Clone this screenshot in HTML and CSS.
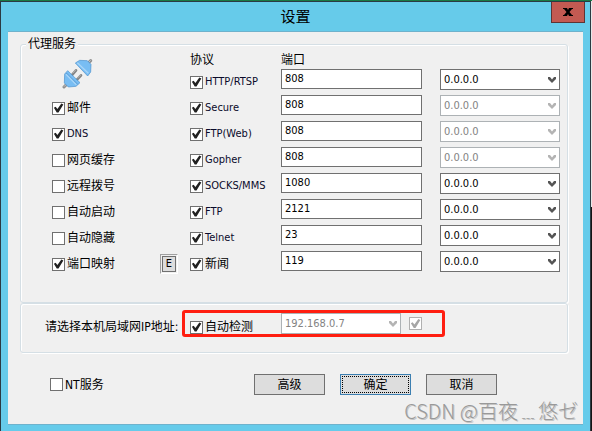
FILE: index.html
```html
<!DOCTYPE html>
<html lang="zh-CN">
<head>
  <meta charset="UTF-8">
  <meta name="viewport" content="width=device-width, initial-scale=1.0">
  <title>设置</title>
  <link rel="stylesheet" href="styles.css">
</head>
<body>
  <div class="window">
    <header class="titlebar">
      <h1>设置</h1>
      <button class="close" type="button" aria-label="关闭">
        <svg width="10" height="8" viewBox="0 0 10 8"><path d="M0 0h4l1 2 1-2h4v1H9L6.500 4 9 7h1v1H6L5 6 4 8H0V7h1l2.500-3L1 1H0z"/></svg>
      </button>
    </header>

    <form class="content">
      <fieldset class="group">
        <legend>代理服务</legend>
        <div class="grid">
          <div class="plug">
            <svg width="31" height="31" viewBox="186 174 93 93">
              <path d="M263 191L272 182M203 250L192 261" stroke="#909090" stroke-width="9" stroke-linecap="round"/>
              <path d="M263 190L272 181M203 249L192 260" stroke="#c4c4c4" stroke-width="3"/>
              <path d="M226 189L239 181 262 182 273 193 272 216 263 228Z" fill="#78bdf3" stroke="#4a90cc" stroke-width="2"/>
              <path d="M232 188L265 220" stroke="#a8d5f8" stroke-width="4"/>
              <path d="M217 224L228 211M231 239L243 226" stroke="#858585" stroke-width="8" stroke-linecap="round"/>
              <path d="M218 220L227 210M232 235L242 225" stroke="#b4b4b4" stroke-width="3"/>
              <path d="M203 212L240 248 228 259 205 261 193 249 194 222Z" fill="#78bdf3" stroke="#4a90cc" stroke-width="2"/>
              <path d="M199 219L233 253" stroke="#3c80bd" stroke-width="2"/>
              <path d="M198 223L229 254" stroke="#a8d5f8" stroke-width="4"/>
            </svg>
          </div>
          <span class="head">协议</span>
          <span class="head">端口</span>
          <span></span>

          <label class="check latin"><input type="checkbox" checked>HTTP/RTSP</label>
          <input class="port" type="text" value="808" aria-label="HTTP/RTSP 端口">
          <span class="drop"><select aria-label="HTTP/RTSP 地址"><option>0.0.0.0</option></select></span>

          <label class="check"><input type="checkbox" checked>邮件</label>
          <label class="check latin"><input type="checkbox" checked>Secure</label>
          <input class="port" type="text" value="808" aria-label="Secure 端口">
          <span class="drop off"><select aria-label="Secure 地址" disabled><option>0.0.0.0</option></select></span>

          <label class="check latin"><input type="checkbox" checked>DNS</label>
          <label class="check latin"><input type="checkbox" checked>FTP(Web)</label>
          <input class="port" type="text" value="808" aria-label="FTP(Web) 端口">
          <span class="drop off"><select aria-label="FTP(Web) 地址" disabled><option>0.0.0.0</option></select></span>

          <label class="check"><input type="checkbox">网页缓存</label>
          <label class="check latin"><input type="checkbox" checked>Gopher</label>
          <input class="port" type="text" value="808" aria-label="Gopher 端口">
          <span class="drop off"><select aria-label="Gopher 地址" disabled><option>0.0.0.0</option></select></span>

          <label class="check"><input type="checkbox">远程拨号</label>
          <label class="check latin"><input type="checkbox" checked>SOCKS/MMS</label>
          <input class="port" type="text" value="1080" aria-label="SOCKS/MMS 端口">
          <span class="drop"><select aria-label="SOCKS/MMS 地址"><option>0.0.0.0</option></select></span>

          <label class="check"><input type="checkbox">自动启动</label>
          <label class="check latin"><input type="checkbox" checked>FTP</label>
          <input class="port" type="text" value="2121" aria-label="FTP 端口">
          <span class="drop"><select aria-label="FTP 地址"><option>0.0.0.0</option></select></span>

          <label class="check"><input type="checkbox">自动隐藏</label>
          <label class="check latin"><input type="checkbox" checked>Telnet</label>
          <input class="port" type="text" value="23" aria-label="Telnet 端口">
          <span class="drop"><select aria-label="Telnet 地址"><option>0.0.0.0</option></select></span>

          <div class="mapping">
            <label class="check"><input type="checkbox" checked>端口映射</label>
            <span class="sunken"><button class="edit" type="button">E</button></span>
          </div>
          <label class="check"><input type="checkbox" checked>新闻</label>
          <input class="port" type="text" value="119" aria-label="新闻 端口">
          <span class="drop"><select aria-label="新闻 地址"><option>0.0.0.0</option></select></span>
        </div>
      </fieldset>

      <div class="group lan">
        <label class="lan-label" for="lanIp">请选择本机局域网IP地址:</label>
        <div class="highlight">
          <label class="check detect"><input type="checkbox" checked>自动检测</label>
          <span class="drop off"><select id="lanIp" disabled><option>192.168.0.7</option></select></span>
          <input class="lan-lock" type="checkbox" aria-label="锁定地址" checked disabled>
        </div>
      </div>

      <footer class="actions">
        <label class="check nt"><input type="checkbox">NT服务</label>
        <div class="buttons">
          <button class="btn" type="button">高级</button>
          <button class="btn default" type="submit">确定</button>
          <button class="btn" type="button">取消</button>
        </div>
      </footer>
    </form>
  </div>
  <div class="watermark">CSDN @百夜﹍悠ゼ</div>
</body>
</html>
```

FILE: styles.css
```css
* {
  margin: 0;
  padding: 0;
  box-sizing: border-box;
}

body {
  position: relative;
  min-height: 100vh;
  display: flex;
  padding: 1px 1px 0 0;
  background: linear-gradient(#1a7a45 1px, #e8e8e8 1px, #e8e8e8 207px, #141414 207px);
  color: #000;
  font: 12px/14px "DejaVu Sans Condensed", "Noto Sans CJK SC", sans-serif;
}

button, input, select {
  font: inherit;
  color: inherit;
}

.window {
  flex: 1;
  display: flex;
  flex-direction: column;
  padding: 0 7px 7px;
  background: #66cbea;
  border: 1px solid #2b3a42;
  border-bottom: 0;
}

.titlebar {
  display: grid;
  grid-template-columns: 1fr auto 1fr;
  align-items: center;
  height: 29px;
}

.titlebar h1 {
  grid-column: 2;
  font-size: 15px;
  line-height: 20px;
  font-weight: normal;
}

.close {
  justify-self: end;
  align-self: start;
  width: 34px;
  height: 21px;
  margin-right: -2px;
  background: #c35a52;
  border: 1px solid #5e3434;
  border-top: 0;
  line-height: 1px;
}

.content {
  flex: 1;
  padding: 5px 15px 29px 12px;
  background: #f0f0f0;
  border-top: 1px solid #6fb2cc;
  border-bottom: 1px solid #6fb2cc;
}

.group {
  border: 1px solid #d5dfe5;
  border-radius: 3px;
  box-shadow: inset 1px 1px 0 #fff, 1px 1px 0 #fff;
}

fieldset.group {
  padding: 0 7px 25px 31px;
}

legend {
  margin-left: -26px;
  padding: 0 2px;
  background: #f0f0f0;
}

.grid {
  display: grid;
  grid-template-columns: 138fr 91fr 159fr 120fr;
  grid-template-rows: 18px;
  grid-auto-rows: 26px;
}

.plug {
  grid-row: span 2;
  align-self: end;
  height: 37px;
  padding-left: 10px;
}

.head {
  line-height: 18px;
}

.check {
  display: flex;
  align-items: center;
  gap: 2px;
  font-size: 12px;
  white-space: nowrap;
}

.check.latin {
  color: #0a0a2a;
  font-size: 11px;
}

input[type="checkbox"] {
  appearance: none;
  flex: none;
  width: 13px;
  height: 13px;
  background: #fff;
  border: 1px solid #707070;
}

input[type="checkbox"]:checked::before {
  content: "";
  display: block;
  width: 11px;
  height: 11px;
  background: #212121;
  clip-path: polygon(8% 48%, 24% 38%, 40% 58%, 76% 10%, 94% 18%, 50% 90%, 34% 90%);
}

input[type="checkbox"]:disabled {
  border-color: #b0b0b0;
}

input[type="checkbox"]:disabled::before {
  background: #a6a6a6;
}

.port {
  width: calc(100% - 18px);
  height: 20px;
  padding: 0 3px 1px;
  background: #fff;
  border: 1px solid #707070;
  font-size: 11px;
}

.drop {
  position: relative;
  height: 21px;
  color: #000;
}

.drop select {
  appearance: none;
  display: block;
  width: 100%;
  height: 21px;
  padding: 0 18px 0 3px;
  background: #fff;
  border: 1px solid #707070;
  border-radius: 0;
  font-size: 11px;
  opacity: 1;
}

.drop::after {
  content: "";
  position: absolute;
  right: 4px;
  top: 8px;
  width: 8px;
  height: 6px;
  background: #555;
  clip-path: polygon(0 0, 25% 0, 50% 40%, 75% 0, 100% 0, 100% 33%, 50% 100%, 0 33%);
}

.drop.off select {
  color: #838383;
  border-color: #adb2b5;
}

.drop.off::after {
  background: #b4b4b4;
}

.mapping {
  display: flex;
  justify-content: space-between;
  align-items: center;
  padding-right: 12px;
}

.sunken {
  display: flex;
  padding: 1px;
  border: 1px solid;
  border-color: #a0a0a0 #fff #fff #a0a0a0;
}

.edit {
  width: 14px;
  height: 16px;
  background: #ddd;
  border: 1px solid #707070;
  font-size: 11px;
  line-height: 14px;
}

.lan {
  display: flex;
  align-items: flex-end;
  padding: 6px 0 15px 24px;
}

.lan-label {
  flex: 0 0 137px;
  line-height: 20px;
  white-space: nowrap;
}

.highlight {
  display: flex;
  align-items: center;
  padding: 0 20px 0 5px;
  border: 3px solid #ff1e10;
  border-radius: 3px;
}

.highlight .drop {
  width: 120px;
  margin-right: 8px;
}

.detect {
  align-self: flex-end;
  width: 91px;
}

.actions {
  display: flex;
  align-items: center;
  margin-top: 21px;
  padding-left: 30px;
}

.nt {
  flex: 0 0 204px;
}

.buttons {
  display: flex;
  gap: 15px;
}

.btn {
  width: 71px;
  height: 21px;
  background: #ddd;
  border: 1px solid #707070;
}

.btn.default {
  border-color: #3c7fb1;
  outline: 1px dotted #000;
  outline-offset: -3px;
}

.watermark {
  position: absolute;
  right: 14px;
  bottom: 9px;
  color: #999;
  font: 20px/24px "Noto Sans CJK SC", sans-serif;
  font-weight: 300;
  text-shadow: 1px 1px 0 #c4c4c4;
  pointer-events: none;
}
```
